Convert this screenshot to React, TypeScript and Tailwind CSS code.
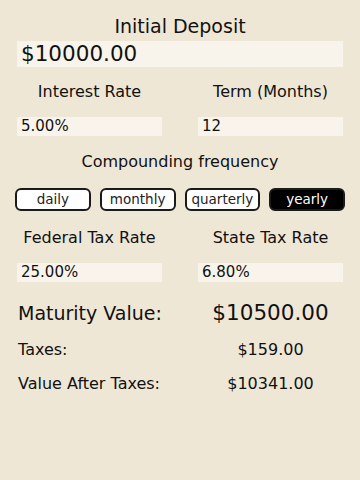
const FREQS = ['daily', 'monthly', 'quarterly', 'yearly'];

function Field({ value, className = '' }: { value: string; className?: string }) {
  return (
    <div className={`bg-[#f8f4eb] pl-[4px] text-[15px] leading-[19px] h-[19px] ${className}`}>{value}</div>
  );
}

export default function App() {
  const selected = 'yearly';
  return (
    <div
      className="w-[360px] h-[480px] bg-[#efe7d6] px-[17px] text-[#111]"
      style={{ fontFamily: '"DejaVu Sans", Verdana, sans-serif' }}
    >
      <div className="pt-[15px] text-center text-[19px] leading-[22px]">Initial Deposit</div>
      <div className="mt-[4px] h-[26px] bg-[#f8f4eb] pl-[4px] text-[21.5px] leading-[26px]">$10000.00</div>

      <div className="mt-[15px] grid grid-cols-2 gap-x-[36px]">
        <div className="text-center text-[16px] leading-[20px]">Interest Rate</div>
        <div className="text-center text-[16px] leading-[20px]">Term (Months)</div>
        <Field value="5.00%" className="mt-[15px]" />
        <Field value="12" className="mt-[15px]" />
      </div>

      <div className="mt-[16px] text-center text-[16px] leading-[20px]">Compounding frequency</div>

      <div className="-mx-[2px] mt-[16px] grid grid-cols-4 gap-[9px]">
        {FREQS.map((f) => (
          <button
            key={f}
            type="button"
            className={`h-[23px] rounded-[6px] border-2 border-[#1a1a1a] text-[13.5px] leading-[19px] ${
              f === selected ? 'bg-black text-white' : 'bg-white text-[#222]'
            }`}
          >
            {f}
          </button>
        ))}
      </div>

      <div className="mt-[17px] grid grid-cols-2 gap-x-[36px]">
        <div className="text-center text-[16px] leading-[20px]">Federal Tax Rate</div>
        <div className="text-center text-[16px] leading-[20px]">State Tax Rate</div>
        <Field value="25.00%" className="mt-[15px]" />
        <Field value="6.80%" className="mt-[15px]" />
      </div>

      <div className="mt-[18px] grid grid-cols-2 gap-x-[36px] items-center">
        <div className="pl-[1px] text-[19px] leading-[26px]">Maturity Value:</div>
        <div className="text-center text-[21.5px] leading-[26px]">$10500.00</div>
      </div>
      <div className="mt-[14px] grid grid-cols-2 gap-x-[36px] items-center">
        <div className="pl-[1px] text-[16px] leading-[20px]">Taxes:</div>
        <div className="text-center text-[16px] leading-[20px]">$159.00</div>
      </div>
      <div className="mt-[14px] grid grid-cols-2 gap-x-[36px] items-center">
        <div className="pl-[1px] text-[16px] leading-[20px]">Value After Taxes:</div>
        <div className="text-center text-[16px] leading-[20px]">$10341.00</div>
      </div>
    </div>
  );
}
